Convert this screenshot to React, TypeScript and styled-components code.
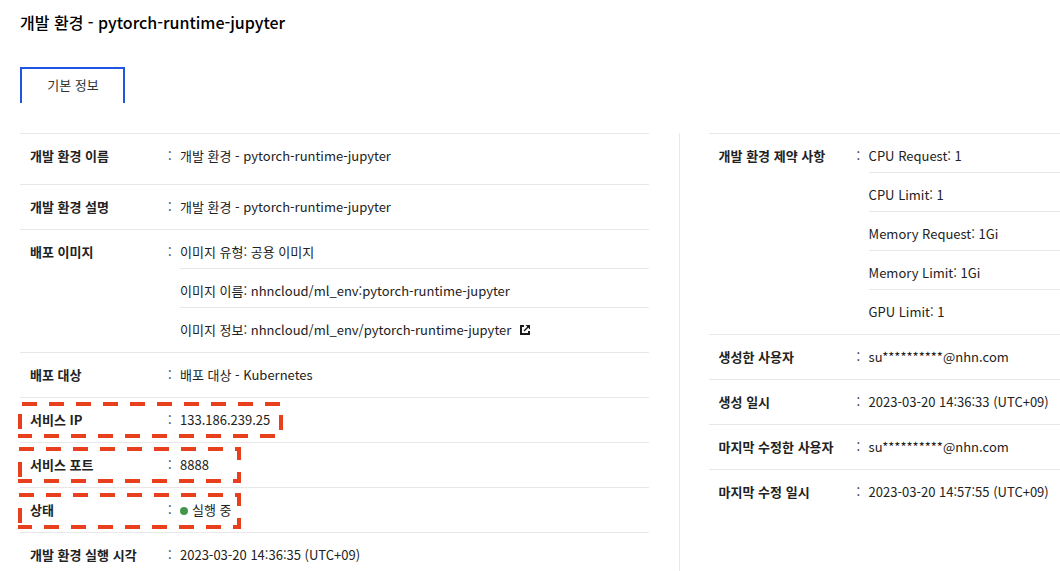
import React from 'react';
import styled, { createGlobalStyle } from 'styled-components';

const GlobalStyle = createGlobalStyle`
  * { box-sizing: border-box; }
  html, body { margin: 0; overflow: hidden; background: #fff; }
  body {
    font-family: 'Noto Sans CJK KR', 'Noto Sans', sans-serif;
    font-size: 13px;
    line-height: 20px;
    color: #222;
  }
`;

const Page = styled.main`
  display: flex;
  flex-direction: column;
  width: 1060px;
  height: 571px;
  padding-left: 20px;
  overflow: hidden;
`;

const Title = styled.h1`
  margin: 10px 0 0;
  font-size: 16px;
  line-height: 24px;
  font-weight: 500;
  color: #000;
`;

const Tabs = styled.nav`
  display: flex;
  margin: 33px 0 30px;
`;

const Tab = styled.button`
  width: 105px;
  height: 36px;
  padding: 0 0 2px 1px;
  border: 2px solid #1f55e0;
  border-bottom: 0;
  background: #fff;
  color: #333;
  font: inherit;
`;

const Columns = styled.div`
  display: flex;
  flex: 1;
  min-height: 0;
`;

const Column = styled.dl<{ $width: number }>`
  flex: none;
  width: ${(p) => p.$width}px;
  margin: 0;
`;

const Divider = styled.div`
  flex: none;
  width: 1px;
  margin: 0 28.6px 0 30px;
  background: #e8e8e8;
`;

const Row = styled.div<{ $tall?: boolean }>`
  position: relative;
  display: flex;
  padding: 12px 0 ${(p) => (p.$tall ? 18 : 12)}px 10px;
  border-top: 1px solid #e8e8e8;
`;

const Label = styled.dt`
  width: 138px;
  font-weight: 700;
`;

const Colon = styled.span`
  width: 12px;
`;

const Values = styled.dd`
  flex: 1;
  margin: 0;
`;

const Value = styled.div`
  display: flex;
  align-items: center;
  height: 20px;
  white-space: nowrap;

  & + & {
    height: 33px;
    margin-top: 6px;
    padding-top: 12px;
    border-top: 1px solid #e8e8e8;
  }
`;

const StatusDot = styled.span`
  width: 8px;
  height: 8px;
  margin: 2px 4px 0 0;
  border-radius: 50%;
  background: #43964a;
`;

const Marker = styled.svg<{ $top: number }>`
  position: absolute;
  left: -2px;
  top: ${(p) => p.$top}px;
  pointer-events: none;
  fill: none;
  stroke: #e8401c;
  stroke-width: 4;
`;

const LinkIcon = styled.svg`
  margin-left: 9px;
`;

const ExternalLink = () => (
  <LinkIcon width="10" height="10" viewBox="0 0 10 10" fill="none" stroke="#1a1a1a">
    <path d="M4 1H1V9H9V6" strokeWidth="2" />
    <path d="M4 6L8 2" strokeWidth="1.5" />
    <path d="M5.5 0H10V4.5Z" fill="#1a1a1a" stroke="none" />
  </LinkIcon>
);

const WideMarker = () => (
  <Marker $top={4} width="265" height="36">
    <path d="M4 2H262" strokeDasharray="15 12" />
    <path d="M263 13V28" />
    <path d="M257 34H0" strokeDasharray="15 12" />
    <path d="M2 12V27" />
  </Marker>
);

const NarrowMarker = ({ top }: { top: number }) => (
  <Marker $top={top} width="223" height="36">
    <path d="M1 2H221V34H0" strokeDasharray="15 12" />
    <path d="M2 15V30" />
  </Marker>
);

type Info = {
  label: string;
  values: React.ReactNode[];
  tall?: boolean;
  marker?: React.ReactNode;
};

const basics: Info[] = [
  { label: '개발 환경 이름', values: ['개발 환경 - pytorch-runtime-jupyter'], tall: true },
  { label: '개발 환경 설명', values: ['개발 환경 - pytorch-runtime-jupyter'] },
  {
    label: '배포 이미지',
    values: [
      '이미지 유형: 공용 이미지',
      '이미지 이름: nhncloud/ml_env:pytorch-runtime-jupyter',
      <>이미지 정보: nhncloud/ml_env/pytorch-runtime-jupyter<ExternalLink /></>,
    ],
  },
  { label: '배포 대상', values: ['배포 대상 - Kubernetes'] },
  { label: '서비스 IP', values: ['133.186.239.25'], marker: <WideMarker /> },
  { label: '서비스 포트', values: ['8888'], marker: <NarrowMarker top={4} /> },
  { label: '상태', values: [<><StatusDot />실행 중</>], marker: <NarrowMarker top={5} /> },
  { label: '개발 환경 실행 시각', values: ['2023-03-20 14:36:35 (UTC+09)'] },
];

const details: Info[] = [
  {
    label: '개발 환경 제약 사항',
    values: ['CPU Request: 1', 'CPU Limit: 1', 'Memory Request: 1Gi', 'Memory Limit: 1Gi', 'GPU Limit: 1'],
  },
  { label: '생성한 사용자', values: ['su**********@nhn.com'] },
  { label: '생성 일시', values: ['2023-03-20 14:36:33 (UTC+09)'] },
  { label: '마지막 수정한 사용자', values: ['su**********@nhn.com'] },
  { label: '마지막 수정 일시', values: ['2023-03-20 14:57:55 (UTC+09)'] },
];

const InfoColumn = ({ items, width }: { items: Info[]; width: number }) => (
  <Column $width={width}>
    {items.map((item) => (
      <Row key={item.label} $tall={item.tall}>
        <Label>{item.label}</Label>
        <Colon>:</Colon>
        <Values>
          {item.values.map((value, i) => (
            <Value key={i}>{value}</Value>
          ))}
        </Values>
        {item.marker}
      </Row>
    ))}
  </Column>
);

export default function App() {
  return (
    <Page lang="ko">
      <GlobalStyle />
      <Title>개발 환경 - pytorch-runtime-jupyter</Title>
      <Tabs>
        <Tab>기본 정보</Tab>
      </Tabs>
      <Columns>
        <InfoColumn items={basics} width={629} />
        <Divider />
        <InfoColumn items={details} width={352} />
      </Columns>
    </Page>
  );
}
